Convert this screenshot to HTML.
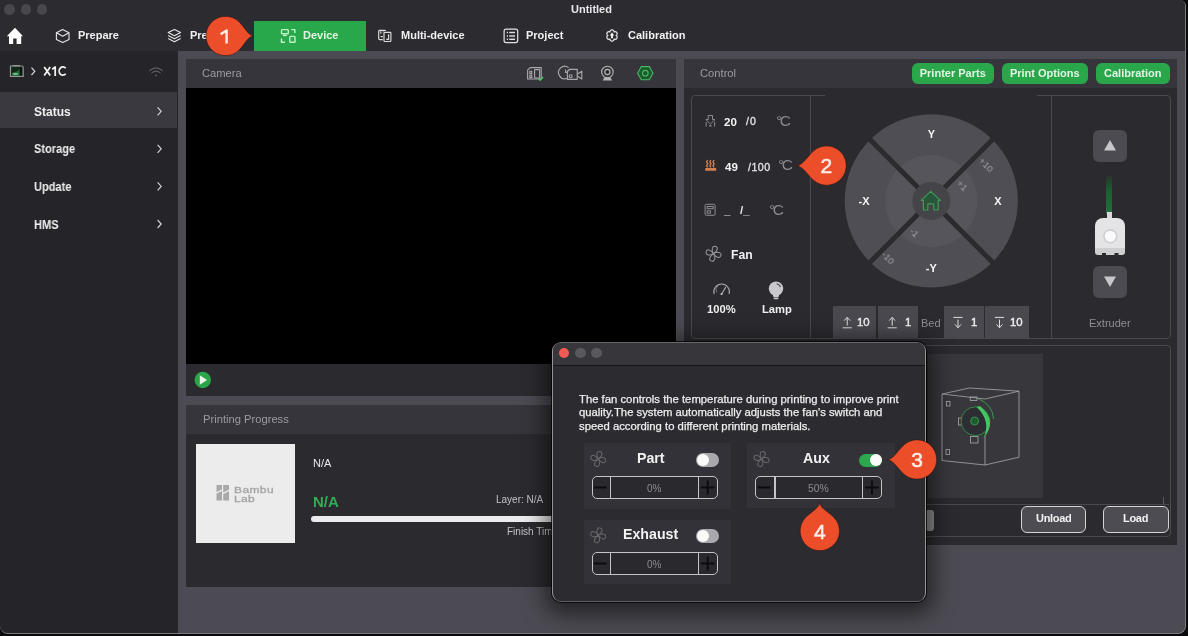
<!DOCTYPE html>
<html><head><meta charset="utf-8">
<style>
*{box-sizing:border-box;margin:0;padding:0}
html,body{width:1188px;height:636px;overflow:hidden;background:#0a0a0c}
body{position:relative;font-family:"Liberation Sans",sans-serif;color:#fff}
.a{position:absolute}
.t{position:absolute;white-space:nowrap;line-height:1;will-change:transform}
svg{position:absolute;overflow:visible}
svg text{will-change:transform}
.tab{font-size:11px;font-weight:bold;color:#f0f0f2;top:30px}
.side{font-size:12px;font-weight:bold;color:#efeff1;left:33.5px}
.hdr{font-size:11.2px;color:#9c9ba1;top:68px}
.gbtn{position:absolute;top:63px;height:21px;background:#2aa64b;border-radius:6px;font-size:11px;font-weight:bold;color:#e3f6e5;text-align:center;line-height:21px;white-space:nowrap;will-change:transform}
</style></head><body>
<!-- window -->
<div class="a" style="left:0;top:0;width:1186px;height:634px;background:#4c4b53;border-right:1px solid #7a797f;border-bottom:1.5px solid #7a797f;border-radius:0 6px 8px 8px"></div>
<!-- top bar -->
<div class="a" style="left:0;top:0;width:1185px;height:51px;background:#2c2b30;border-radius:0 5px 0 0"></div>
<div class="a" style="left:4.2px;top:4.2px;width:10.4px;height:10.4px;border-radius:50%;background:#48474c"></div>
<div class="a" style="left:20.8px;top:4.2px;width:10.4px;height:10.4px;border-radius:50%;background:#48474c"></div>
<div class="a" style="left:36.8px;top:4.2px;width:10.4px;height:10.4px;border-radius:50%;background:#48474c"></div>
<div class="t" style="left:570.5px;top:4px;font-size:11px;font-weight:bold;color:#e8e8ea">Untitled</div>

<!-- tabs -->
<svg style="left:0;top:0" width="1" height="1">
 <!-- home -->
 <path d="M15 27.8 L6.8 36.3 L9 36.3 L9 44 L13.2 44 L13.2 38.4 L16.6 38.4 L16.6 44 L21.2 44 L21.2 36.3 L23 36.3 Z" fill="#fff"/>
 <!-- cube -->
 <g fill="none" stroke="#e6e6e8" stroke-width="1.1" stroke-linejoin="round">
  <path d="M62.7 29.4 L69 32.8 L69 39.4 L62.7 42.6 L56.4 39.4 L56.4 32.8 Z"/>
  <path d="M56.4 32.8 L62.7 36.2 L69 32.8"/>
 </g>
 <!-- layers -->
 <g fill="none" stroke="#e6e6e8" stroke-width="1.1" stroke-linejoin="round">
  <path d="M174.4 29.5 L180.6 32.6 L174.4 35.7 L168.2 32.6 Z"/>
  <path d="M168.2 35.6 L174.4 38.7 L180.6 35.6"/>
  <path d="M168.2 38.6 L174.4 41.7 L180.6 38.6"/>
 </g>
</svg>
<div class="t tab" style="left:78.4px">Prepare</div>
<div class="t tab" style="left:189.5px">Preview</div>
<div class="a" style="left:254px;top:21px;width:112px;height:30px;background:#29a74b"></div>
<svg style="left:0;top:0" width="1" height="1">
 <g fill="none" stroke="#bff5c9" stroke-width="1.4">
  <rect x="281.5" y="29.6" width="6.8" height="4.2" rx="0.8"/>
  <path d="M283 35.4 H286.8"/>
  <path d="M291.3 29.6 H294.8 V33"/>
  <path d="M281.5 38.6 V42.2 H285"/>
  <rect x="289.8" y="36.4" width="5.2" height="5.8" rx="0.8"/>
 </g>
</svg>
<div class="t tab" style="left:303.3px;color:#dff7e3">Device</div>
<svg style="left:0;top:0" width="1" height="1">
 <g fill="none" stroke="#dcdcde" stroke-width="1.15">
  <rect x="378.7" y="30.4" width="6.8" height="9.2" rx="0.8"/>
  <path d="M380.8 31.2 V33.6 M383.4 31.2 V33.6 M380.6 36.6 H383.6"/>
  <rect x="384" y="32.3" width="6.9" height="9.2" rx="0.8" fill="#2c2b30" stroke="#2c2b30" stroke-width="2.4"/>
  <rect x="384" y="32.3" width="6.9" height="9.2" rx="0.8"/>
  <path d="M388.6 34.2 V39.4 H386.2"/>
 </g>
 <g fill="none" stroke="#e2e2e4" stroke-width="1.2">
  <rect x="504.1" y="29.2" width="13.6" height="13.4" rx="2"/>
 </g>
 <g fill="#e2e2e4">
  <rect x="506.8" y="31.8" width="1.2" height="1.4"/><rect x="509.2" y="31.8" width="5.8" height="1.4"/>
  <rect x="506.8" y="35.3" width="1.2" height="1.4"/><rect x="509.2" y="35.3" width="5.8" height="1.4"/>
  <rect x="506.8" y="38.6" width="1.2" height="1.4"/><rect x="509.2" y="38.6" width="5.8" height="1.4"/>
 </g>
 <g fill="none" stroke="#e6e6e8" stroke-width="1.2">
  <path d="M616.2 35.5L616.5 35.2L616.8 34.9L617.0 34.5L617.1 34.1L617.1 33.8L617.1 33.4L617.0 33.0L616.8 32.7L616.6 32.4L616.4 32.1L616.1 31.9L615.7 31.8L615.4 31.7L615.0 31.7L614.5 31.7L614.1 31.9L614.0 31.4L613.9 31.0L613.6 30.7L613.4 30.4L613.1 30.2L612.7 30.0L612.4 29.9L612.0 29.9L611.6 29.9L611.3 30.0L610.9 30.2L610.6 30.4L610.4 30.7L610.1 31.0L610.0 31.4L609.9 31.9L609.5 31.7L609.0 31.7L608.6 31.7L608.3 31.8L607.9 31.9L607.6 32.1L607.4 32.4L607.2 32.7L607.0 33.0L606.9 33.4L606.9 33.8L606.9 34.1L607.0 34.5L607.2 34.9L607.5 35.2L607.8 35.5L607.5 35.8L607.2 36.1L607.0 36.5L606.9 36.9L606.9 37.2L606.9 37.6L607.0 38.0L607.2 38.3L607.4 38.6L607.6 38.9L607.9 39.1L608.3 39.2L608.6 39.3L609.0 39.3L609.5 39.3L609.9 39.1L610.0 39.6L610.1 40.0L610.4 40.3L610.6 40.6L610.9 40.8L611.3 41.0L611.6 41.1L612.0 41.1L612.4 41.1L612.7 41.0L613.1 40.8L613.4 40.6L613.6 40.3L613.9 40.0L614.0 39.6L614.1 39.1L614.5 39.3L615.0 39.3L615.4 39.3L615.7 39.2L616.1 39.1L616.4 38.9L616.6 38.6L616.8 38.3L617.0 38.0L617.1 37.6L617.1 37.2L617.1 36.9L617.0 36.5L616.8 36.1L616.5 35.8Z"/>
 </g>
 <path d="M612 32.6 L614.2 35.4 L612.9 35.4 L612.9 38.2 L611.1 38.2 L611.1 35.4 L609.8 35.4 Z" fill="#fff"/>
</svg>
<div class="t tab" style="left:400.5px">Multi-device</div>
<div class="t tab" style="left:525.8px">Project</div>
<div class="t tab" style="left:627.8px">Calibration</div>

<!-- sidebar -->
<div class="a" style="left:0;top:51px;width:178px;height:582px;background:#252429;border-radius:0 0 0 8px"></div>
<div class="a" style="left:0;top:92px;width:177px;height:36px;background:#3a393f"></div>
<svg style="left:0;top:0" width="1" height="1">
 <path d="M10.5 66 H22 Q23.2 66.2 23.2 67.5 V76.4 H10.5 Z" fill="#15251a" stroke="#8e9990" stroke-width="1.2"/>
 <path d="M20.8 67.5 V75.5" stroke="#0a0f0b" stroke-width="1.6"/>
 <path d="M12.8 65.8 H20" stroke="#a5aca7" stroke-width="1"/>
 <ellipse cx="15.8" cy="73.8" rx="3.6" ry="1.6" fill="#5aa870"/>
 <path d="M11.8 75.5 Q13 71.5 16 71.8 Q18.5 70.8 19.5 68.5 V75.5 Z" fill="#22683a"/>
 <ellipse cx="15.5" cy="74" rx="3" ry="1.1" fill="#6fbf86"/>
 <path d="M31.5 67.6 L34.8 71.3 L31.5 75" fill="none" stroke="#d8d8da" stroke-width="1.2"/>
 <g fill="none" stroke="#5c5b60" stroke-width="1.2" stroke-linecap="round">
  <path d="M149.6 70.6 Q156 65 162.4 70.6"/>
  <path d="M151.8 72.9 Q156 69.3 160.2 72.9"/>
 </g>
 <circle cx="156" cy="75.4" r="1" fill="#5c5b60"/>
 <g fill="none" stroke="#cfcfd2" stroke-width="1.2">
  <path d="M157.6 107.3 L161.2 111.3 L157.6 115.3"/>
  <path d="M157.6 144.8 L161.2 148.8 L157.6 152.8"/>
  <path d="M157.6 182.4 L161.2 186.4 L157.6 190.4"/>
  <path d="M157.6 220 L161.2 224 L157.6 228"/>
 </g>
</svg>
<svg style="left:0;top:0" width="1" height="1"><g fill="none" stroke="#f2f2f2" stroke-width="1.75">
 <path d="M44.2 66.9 L50.2 75.4 M50.2 66.9 L44.2 75.4"/>
 <path d="M52.2 69.2 L55.2 67 V75.9" stroke-linejoin="round"/>
 <path d="M65.7 68.3 A3.75 4.15 0 1 0 65.7 73.8"/>
</g></svg>
<div class="t side" style="top:105.5px">Status</div>
<div class="t side" style="top:143px;transform:scaleX(0.92);transform-origin:0 0">Storage</div>
<div class="t side" style="top:180.5px;transform:scaleX(0.92);transform-origin:0 0">Update</div>
<div class="t side" style="top:218.5px;transform:scaleX(0.92);transform-origin:0 0">HMS</div>
<!-- camera panel -->
<div class="a" style="left:186px;top:59px;width:490px;height:29px;background:#36353b"></div>
<div class="t hdr" style="left:202px">Camera</div>
<svg style="left:0;top:0" width="1" height="1">
 <g fill="none" stroke="#a9a8ad" stroke-width="1.1" stroke-linejoin="round">
  <path d="M530.2 67.6 H541.2 V79 H527.6 V70.2 Z"/>
  <rect x="534.6" y="69.6" width="5" height="8.4" rx="0.5"/>
  <path d="M529.8 71.2 H531.8 V73.6 H529.8 Z M529.8 75.2 H531.8 V77.6 H529.8 Z"/>
 </g>
 <path d="M538.6 78.4 L540.2 80 L543 77" fill="none" stroke="#4fc46e" stroke-width="1.6"/>
 <g fill="none" stroke="#a9a8ad" stroke-width="1.1" stroke-linejoin="round">
  <path d="M568.6 67.6 A6.2 6.2 0 1 0 567.2 78.2"/>
  <path d="M565.6 69.6 V72.4 H567"/>
  <path d="M567.4 70.8 H569 V69.4 H577.2 V79.4 H567.4 Z"/>
  <circle cx="570.6" cy="76.2" r="1.5"/>
  <path d="M577.2 74.2 L581.8 71.2 V79 L577.2 76"/>
 </g>
 <g fill="none" stroke="#b4b3b8" stroke-width="1.1">
  <circle cx="607.4" cy="72" r="5.8"/>
  <circle cx="607.4" cy="72" r="2.6"/>
 </g>
 <circle cx="607.4" cy="72" r="1.1" fill="#1a1a1c"/>
 <path d="M604.2 77.4 L602.8 80.6 H612 L610.6 77.4 Z" fill="#b4b3b8"/>
 <path d="M641.3 66.6 H649.3 L653 73.2 L649.3 79.8 H641.3 L637.6 73.2 Z" fill="#175c2a" stroke="#4db46b" stroke-width="1.1"/>
 <circle cx="645.3" cy="73.2" r="2.8" fill="none" stroke="#4db46b" stroke-width="1.1"/>
</svg>
<div class="a" style="left:186px;top:88px;width:490px;height:276px;background:#000"></div>
<div class="a" style="left:186px;top:364px;width:490px;height:32px;background:#2b2a2f"></div>
<svg style="left:0;top:0" width="1" height="1">
 <circle cx="202.8" cy="380" r="8.2" fill="#2aa54a"/>
 <path d="M199.8 375.3 L207 380 L199.8 384.7 Z" fill="#e9f7ea"/>
</svg>

<!-- printing progress -->
<div class="a" style="left:186px;top:405px;width:490px;height:29px;background:#36353b"></div>
<div class="t hdr" style="left:202.5px;top:414px">Printing Progress</div>
<div class="a" style="left:186px;top:434px;width:490px;height:152.5px;background:#2b2a2f"></div>
<div class="a" style="left:196px;top:444px;width:99px;height:99px;background:#ececec"></div>
<svg style="left:0;top:0" width="1" height="1">
 <g fill="#a9a9a9">
  <path d="M216.5 485 H222 V489.5 L216.5 492 Z"/>
  <path d="M216.5 493.5 L222 491 V500.5 H216.5 Z"/>
  <path d="M223.2 485 H229 V489.8 L223.2 492.5 Z"/>
  <path d="M223.2 494 L229 491.3 V500.5 H223.2 Z"/>
 </g>
</svg>
<div class="t" style="left:233.6px;top:485.6px;font-size:8.8px;color:#a4a4a4;-webkit-text-stroke:0.3px #a4a4a4;letter-spacing:0.3px;line-height:8.6px;transform:scaleX(1.36);transform-origin:0 0">Bambu<br>Lab</div>
<div class="t" style="left:312.5px;top:457.5px;font-size:11px;color:#e8e8ea">N/A</div>
<div class="t" style="left:312.5px;top:493.5px;font-size:15px;font-weight:bold;color:#2fae55">N/A</div>
<div class="t" style="left:495.5px;top:495px;font-size:10px;color:#c5c5c8">Layer: N/A</div>
<div class="t" style="left:506.5px;top:527px;font-size:10px;color:#c5c5c8">Finish Time</div>
<div class="a" style="left:311px;top:515.5px;width:260px;height:6.5px;border-radius:3.5px;background:#ececee"></div>
<!-- control panel -->
<div class="a" style="left:684px;top:59px;width:493px;height:29px;background:#36353b"></div>
<div class="t hdr" style="left:700px">Control</div>
<div class="gbtn" style="left:911.5px;width:81.5px">Printer Parts</div>
<div class="gbtn" style="left:1002px;width:85.5px">Print Options</div>
<div class="gbtn" style="left:1096px;width:73.5px">Calibration</div>
<div class="a" style="left:684px;top:88px;width:493px;height:457px;background:#2b2a2f"></div>
<!-- top inner box -->
<div class="a" style="left:691px;top:95px;width:480px;height:244px;border:1px solid #4a494f;border-radius:4px"></div>
<div class="a" style="left:810px;top:96px;width:1px;height:242px;background:#4a494f"></div>
<div class="a" style="left:1051px;top:96px;width:1px;height:242px;background:#4a494f"></div>
<div class="a" style="left:825px;top:95px;width:212px;height:1px;background:#2b2a2f"></div>

<!-- temps -->
<svg style="left:0;top:0" width="1" height="1">
 <g fill="none" stroke="#8d8c91" stroke-width="1">
  <path d="M708.3 115.5 H712.5 V119.5 H715 L710.4 124 L705.8 119.5 H708.3 Z"/>
  <path d="M706.2 122 V126.5 M714.6 122 V126.5"/>
 </g>
 <g fill="#8d8c91"><rect x="709.4" y="125" width="2" height="1.6"/></g>
 <g fill="none" stroke="#d98050" stroke-width="1.3" stroke-linejoin="round">
  <path d="M707.6 160 L706.6 161.9 L707.8 163.8 L706.6 165.6 L707.6 167.4"/>
  <path d="M710.8 160 L709.8 161.9 L711 163.8 L709.8 165.6 L710.8 167.4"/>
  <path d="M714 160 L713 161.9 L714.2 163.8 L713 165.6 L714 167.4"/>
 </g>
 <rect x="705.2" y="168" width="11" height="2.8" rx="0.6" fill="#d6804e"/>
 <g fill="none" stroke="#8d8c91" stroke-width="1">
  <rect x="705.1" y="204.3" width="10" height="11" rx="1.2"/>
  <rect x="707.2" y="206.5" width="6" height="2.2"/>
  <rect x="707.2" y="210.8" width="3.2" height="2.4"/>
 </g>
 <!-- fan icon -->
 <g fill="none" stroke="#9a999e" stroke-width="1" transform="translate(713.5 253.7)">
  <path id="blade" d="M0 0 C-3.4 -2.4 -3.8 -7.4 -0.6 -7.6 C2.6 -7.8 3.4 -4.6 0 0 Z" transform="rotate(18)"/>
  <use href="#blade" transform="rotate(90)"/>
  <use href="#blade" transform="rotate(180)"/>
  <use href="#blade" transform="rotate(270)"/>
 </g>
 <!-- gauge -->
 <g fill="none" stroke="#a8a7ac" stroke-width="1.1" stroke-linecap="round">
  <path d="M714 293.6 A7.8 7.8 0 1 1 729.2 293.6"/>
  <path d="M716.4 292.2 A5.4 5.4 0 0 1 718 285.6" stroke-width="0.6"/>
  <path d="M721.6 294 L725.6 287.4"/>
 </g>
 <circle cx="721.6" cy="294" r="1.1" fill="#c8c7cc"/>
 <!-- lamp -->
 <circle cx="776" cy="288.6" r="7.2" fill="#c9c8cd"/>
 <path d="M772.2 292.5 H779.8 L778.6 297 H773.4 Z" fill="#c9c8cd"/>
 <rect x="773.6" y="297.6" width="4.8" height="1.6" rx="0.6" fill="#c9c8cd"/>
 <path d="M776.6 283.8 A4.8 4.8 0 0 1 780.4 287.2" fill="none" stroke="#4d4c52" stroke-width="1.1"/>
</svg>
<div class="t" style="left:723.8px;top:116px;font-size:11.6px;font-weight:bold;color:#f3f3f4">20</div>
<div class="t" style="left:746.4px;top:116.2px;font-size:10.6px;color:#e5e5e7;-webkit-text-stroke:0.3px #e5e5e7;letter-spacing:1px">/0</div>
<div class="t" style="left:776px;top:113px;font-size:15.5px;color:#8a898e;letter-spacing:-2.4px">°C</div>
<div class="t" style="left:724.8px;top:160.5px;font-size:11.6px;font-weight:bold;color:#f3f3f4">49</div>
<div class="t" style="left:748px;top:161.5px;font-size:10.6px;color:#e5e5e7;letter-spacing:0.5px;-webkit-text-stroke:0.3px #e5e5e7">/100</div>
<div class="t" style="left:777.5px;top:157.3px;font-size:15.5px;color:#8a898e;letter-spacing:-2.4px">°C</div>
<div class="t" style="left:723.8px;top:203.5px;font-size:11.6px;font-weight:bold;color:#f3f3f4">_</div>
<div class="t" style="left:739.8px;top:203.5px;font-size:11.6px;font-weight:bold;color:#e5e5e7">/_</div>
<div class="t" style="left:769.3px;top:201.5px;font-size:15.5px;color:#8a898e;letter-spacing:-2.4px">°C</div>
<div class="t" style="left:730.5px;top:248.5px;font-size:12.2px;font-weight:bold;color:#f0f0f2">Fan</div>
<div class="t" style="left:706.5px;top:304px;font-size:11.2px;font-weight:bold;color:#efeff1">100%</div>
<div class="t" style="left:761.5px;top:304px;font-size:11.2px;font-weight:bold;color:#efeff1">Lamp</div>

<!-- joystick -->
<svg style="left:0;top:0" width="1" height="1">
 <circle cx="931.3" cy="200.9" r="86.6" fill="#4f4e55"/>
 <circle cx="931.3" cy="200.9" r="46" fill="#56555b"/>
 <g stroke="#2b2a2f" stroke-width="5">
  <path d="M869.5 139.1 L993.1 262.7 M993.1 139.1 L869.5 262.7"/>
 </g>
 <circle cx="931.3" cy="200.9" r="19" fill="#454449"/>
 <path d="M930.8 191.4 L940.4 200.4 L938.2 200.4 L938.2 210 L933.8 210 L933.8 203.8 L927.8 203.8 L927.8 210 L923.4 210 L923.4 200.4 L921.2 200.4 Z" fill="#28563a" stroke="#3f9a58" stroke-width="1.2" stroke-linejoin="round"/>
 <g font-family="Liberation Sans" font-size="9.6" fill="#a3a2a8">
  <text x="986" y="168" transform="rotate(45 986 165)" text-anchor="middle">+10</text>
  <text x="962.5" y="188.5" transform="rotate(45 962.5 185.5)" text-anchor="middle">+1</text>
  <text x="914.6" y="235.5" transform="rotate(45 914.6 232.5)" text-anchor="middle">-1</text>
  <text x="888" y="261" transform="rotate(45 888 258)" text-anchor="middle">-10</text>
 </g>
 <g font-family="Liberation Sans" font-size="11" font-weight="bold" fill="#f4f4f5" text-anchor="middle">
  <text x="931.3" y="138">Y</text>
  <text x="864" y="205">-X</text>
  <text x="998" y="205">X</text>
  <text x="931.3" y="272">-Y</text>
 </g>
</svg>

<!-- bed buttons -->
<div class="a" style="left:833px;top:306px;width:43px;height:33px;background:#4a4950"></div>
<div class="a" style="left:878px;top:306px;width:39.5px;height:33px;background:#4a4950"></div>
<div class="a" style="left:943.5px;top:306px;width:40px;height:33px;background:#4a4950"></div>
<div class="a" style="left:985px;top:306px;width:43.5px;height:33px;background:#4a4950"></div>
<svg style="left:0;top:0" width="1" height="1">
 <g fill="none" stroke="#dedee0" stroke-width="1">
  <path d="M847.2 325.6 V317.6 M844.2 320.6 L847.2 317.4 L850.2 320.6 M842.6 327.8 H851.8"/>
  <path d="M892.2 325.6 V317.6 M889.2 320.6 L892.2 317.4 L895.2 320.6 M887.6 327.8 H896.8"/>
  <path d="M958 319.6 V327.6 M955 324.4 L958 327.8 L961 324.4 M953.4 317.4 H962.6"/>
  <path d="M999.5 319.6 V327.6 M996.5 324.4 L999.5 327.8 L1002.5 324.4 M994.9 317.4 H1004.1"/>
 </g>
</svg>
<div class="t" style="left:857px;top:317px;font-size:11.4px;color:#ededef;-webkit-text-stroke:0.4px #ededef">10</div>
<div class="t" style="left:905px;top:317px;font-size:11.4px;color:#ededef;-webkit-text-stroke:0.4px #ededef">1</div>
<div class="t" style="left:921.3px;top:317.5px;font-size:11px;color:#8f8e93">Bed</div>
<div class="t" style="left:971px;top:317px;font-size:11.4px;color:#ededef;-webkit-text-stroke:0.4px #ededef">1</div>
<div class="t" style="left:1010px;top:317px;font-size:11.4px;color:#ededef;-webkit-text-stroke:0.4px #ededef">10</div>

<!-- extruder -->
<div class="a" style="left:1093px;top:129.5px;width:34px;height:32.5px;border-radius:6px;background:#4c4b52"></div>
<svg style="left:0;top:0" width="1" height="1">
 <path d="M1110 140 L1116 150.5 H1104 Z" fill="#c8c7cc"/>
</svg>
<div class="a" style="left:1093px;top:265.5px;width:34px;height:32.5px;border-radius:6px;background:#4c4b52"></div>
<svg style="left:0;top:0" width="1" height="1"><path d="M1104 276.5 H1116 L1110 287 Z" fill="#c8c7cc"/></svg>
<div class="a" style="left:1106.2px;top:176px;width:6.4px;height:38px;background:linear-gradient(180deg,rgba(25,80,40,0.3),#1b5e2e 35%,#22703a);width:6.2px"></div>
<div class="a" style="left:1107px;top:212px;width:5px;height:7px;background:#d8d8da"></div>
<div class="a" style="left:1095.3px;top:218px;width:30px;height:34px;border-radius:8px 8px 2px 2px;background:#e4e4e6"></div>
<div class="a" style="left:1095.3px;top:248px;width:30px;height:7px;border-radius:0 0 3px 3px;background:#cfcfd2"></div>
<svg style="left:0;top:0" width="1" height="1">
 <circle cx="1110.3" cy="236.3" r="6.4" fill="#fafafa" stroke="#d0d0d3" stroke-width="1.6"/>
 <rect x="1102" y="253" width="4" height="2.5" fill="#2b2a2f"/>
 <rect x="1114.5" y="253" width="4" height="2.5" fill="#2b2a2f"/>
</svg>
<div class="t" style="left:1088.8px;top:317.5px;font-size:11px;color:#8f8e93">Extruder</div>

<!-- lower ams box -->
<div class="a" style="left:691px;top:344.5px;width:480px;height:192.5px;border:1px solid #4a494f;border-radius:4px"></div>
<div class="a" style="left:927.5px;top:354px;width:115.5px;height:143.5px;background:#38373c"></div>
<div class="a" style="left:692px;top:504px;width:477px;height:1px;background:#4a494f"></div>
<div class="a" style="left:1162.5px;top:497px;width:1px;height:7px;background:#5a595e"></div>
<div class="a" style="left:925px;top:510px;width:9px;height:21px;border-radius:3px;background:#8e8d92"></div>
<svg style="left:0;top:0" width="1" height="1">
 <g fill="none" stroke="#a9a8ad" stroke-width="0.8">
  <path d="M942 394 L969.5 388 L1019 391.2 L1019 457.2 L985 465 L942 460.5 Z"/>
  <path d="M942 394 L985 399 L1019 391.2 M985 436 L985 465"/>
  <rect x="946.5" y="401.5" width="3.5" height="4.5"/>
  <rect x="946" y="449.5" width="3.5" height="5"/>
  <rect x="958.6" y="418" width="4.4" height="7"/>
  <rect x="970.6" y="436.6" width="7.4" height="6.4"/>
  <rect x="970.2" y="397" width="6.8" height="3.4"/>
 </g>
 <circle cx="975.5" cy="421.2" r="14.4" fill="#2e2d33" stroke="#2f8a45" stroke-width="1"/>
 <circle cx="974.6" cy="421" r="4" fill="#1f5a30" stroke="#3a9d55" stroke-width="0.9"/>
 <path d="M980 406 Q998 421 983.5 438 Q991.5 421 976.5 407 Z" fill="#44c663"/>
 <path d="M978 398.5 Q993 405 993.5 419" fill="none" stroke="#3ab457" stroke-width="0.8"/>
</svg>
<div class="a" style="left:1020.5px;top:506px;width:65.5px;height:27px;border:1.5px solid #d4d3d8;border-radius:6px;background:#4d4c53"></div>
<div class="a" style="left:1102.5px;top:506px;width:66px;height:27px;border:1.5px solid #d4d3d8;border-radius:6px;background:#4d4c53"></div>
<div class="t" style="left:1035.6px;top:513px;font-size:11px;font-weight:bold;color:#f2f2f3;letter-spacing:-0.3px">Unload</div>
<div class="t" style="left:1123.2px;top:513px;font-size:11px;font-weight:bold;color:#f2f2f3;letter-spacing:-0.3px">Load</div>
<!-- dialog -->
<div class="a" style="left:552px;top:342px;width:374px;height:260px;border-radius:9px;background:#2c2b30;border:1px solid #959499;border-bottom-color:#5f5e63;border-top-color:#68676c;box-shadow:0 0 0 1px rgba(0,0,0,0.75),0 5px 22px 7px rgba(0,0,0,0.55);overflow:hidden">
 <div class="a" style="left:0;top:0;width:372px;height:22.5px;background:#37363b;border-bottom:1px solid #141316"></div>
</div>
<div class="a" style="left:558.5px;top:347.5px;width:10.5px;height:10.5px;border-radius:50%;background:#f25a54"></div>
<div class="a" style="left:575px;top:347.5px;width:10.5px;height:10.5px;border-radius:50%;background:#59585d"></div>
<div class="a" style="left:591.2px;top:347.5px;width:10.5px;height:10.5px;border-radius:50%;background:#59585d"></div>
<div class="t" style="left:579px;top:392.5px;font-size:11.3px;line-height:13.3px;color:#eeeef0;-webkit-text-stroke:0.25px #eeeef0">The fan controls the temperature during printing to improve print<br>quality.The system automatically adjusts the fan's switch and<br>speed according to different printing materials.</div>

<div class="a" style="left:584px;top:443px;width:147px;height:66px;background:#333238"></div>
<div class="a" style="left:747px;top:443px;width:148px;height:65px;background:#333238"></div>
<div class="a" style="left:584px;top:520px;width:147px;height:64px;background:#333238"></div>
<svg style="left:0;top:0" width="1" height="1">
 <defs>
  <path id="bl2" d="M0 0 C-3.4 -2.4 -3.8 -7.4 -0.6 -7.6 C2.6 -7.8 3.4 -4.6 0 0 Z" transform="rotate(18)"/>
 </defs>
 <g fill="none" stroke="#69686d" stroke-width="1">
  <g transform="translate(598.2 459) "><use href="#bl2"/><use href="#bl2" transform="rotate(90)"/><use href="#bl2" transform="rotate(180)"/><use href="#bl2" transform="rotate(270)"/></g>
  <g transform="translate(761.5 459) "><use href="#bl2"/><use href="#bl2" transform="rotate(90)"/><use href="#bl2" transform="rotate(180)"/><use href="#bl2" transform="rotate(270)"/></g>
  <g transform="translate(598.2 535.3) "><use href="#bl2"/><use href="#bl2" transform="rotate(90)"/><use href="#bl2" transform="rotate(180)"/><use href="#bl2" transform="rotate(270)"/></g>
 </g>
</svg>
<div class="t" style="left:637.2px;top:450.5px;font-size:14.2px;font-weight:bold;color:#f2f2f3">Part</div>
<div class="t" style="left:802.5px;top:450.5px;font-size:14.2px;font-weight:bold;color:#f2f2f3">Aux</div>
<div class="t" style="left:623.3px;top:527px;font-size:14.2px;font-weight:bold;color:#f2f2f3">Exhaust</div>
<!-- toggles -->
<div class="a" style="left:696px;top:453px;width:22.5px;height:13.5px;border-radius:7px;background:#a9a8ad"></div>
<div class="a" style="left:696.5px;top:453.5px;width:12.5px;height:12.5px;border-radius:50%;background:#fafafa"></div>
<div class="a" style="left:859px;top:453.5px;width:23px;height:13px;border-radius:7px;background:#2ea84f"></div>
<div class="a" style="left:869.5px;top:454px;width:12px;height:12px;border-radius:50%;background:#fafafa"></div>
<div class="a" style="left:696px;top:529px;width:22.5px;height:13.5px;border-radius:7px;background:#a9a8ad"></div>
<div class="a" style="left:696.5px;top:529.5px;width:12.5px;height:12.5px;border-radius:50%;background:#fafafa"></div>
<!-- steppers -->
<div class="a" style="left:591.5px;top:476px;width:126.5px;height:23px;border:1.5px solid #c4c3c8;border-radius:5px;background:#2a292e"></div>
<div class="a" style="left:755.3px;top:476px;width:126.5px;height:23px;border:1.5px solid #c4c3c8;border-radius:5px;background:#2a292e"></div>
<div class="a" style="left:591.5px;top:552px;width:126.5px;height:23px;border:1.5px solid #c4c3c8;border-radius:5px;background:#2a292e"></div>
<div class="a" style="left:609.5px;top:477px;width:1.2px;height:21px;background:#c4c3c8"></div>
<div class="a" style="left:697.7px;top:477px;width:1.2px;height:21px;background:#c4c3c8"></div>
<div class="a" style="left:774.4px;top:477px;width:1.2px;height:21px;background:#c4c3c8"></div>
<div class="a" style="left:862.2px;top:477px;width:1.2px;height:21px;background:#c4c3c8"></div>
<div class="a" style="left:609.5px;top:553px;width:1.2px;height:21px;background:#c4c3c8"></div>
<div class="a" style="left:697.7px;top:553px;width:1.2px;height:21px;background:#c4c3c8"></div>
<svg style="left:0;top:0" width="1" height="1">
 <g stroke="#0c0c0e" stroke-width="1.9">
  <path d="M594 487.5 H606.5 M701 487.5 H714.5 M707.7 480.5 V494.5"/>
  <path d="M757.8 487.5 H770.3 M865.2 487.5 H878.7 M872 480.5 V494.5"/>
  <path d="M594 563.5 H606.5 M701 563.5 H714.5 M707.7 556.5 V570.5"/>
 </g>
</svg>
<div class="t" style="left:646.5px;top:484px;font-size:10px;color:#8c8b90">0%</div>
<div class="t" style="left:807.5px;top:484px;font-size:10.4px;color:#8c8b90">50%</div>
<div class="t" style="left:646.5px;top:560px;font-size:10px;color:#8c8b90">0%</div>

<!-- callouts -->
<svg style="left:0;top:0" width="1" height="1">
 <defs>
  <path id="cal" d="M0 -19.6 A19.6 19.6 0 0 1 17.4 9 Q12 16 0 19.6 A19.6 19.6 0 0 1 0 -19.6 Z"/>
 </defs>
 <g fill="#ec4e2a" stroke="#2a1410" stroke-width="0.9" stroke-opacity="0.6" stroke-linejoin="round">
  <path d="M254.00 35.80 C247.00 35.85 243.53 24.02 235.87 19.31 L234.04 18.31 L232.11 17.51 L230.11 16.93 L228.06 16.55 L225.98 16.40 L223.89 16.47 L221.83 16.77 L219.80 17.28 L217.85 18.00 L215.98 18.92 L214.22 20.04 L212.59 21.34 L211.10 22.81 L209.78 24.43 L208.64 26.17 L207.69 28.03 L206.95 29.98 L206.41 31.99 L206.10 34.05 L206.00 36.14 L206.13 38.22 L206.47 40.28 L207.04 42.29 L207.81 44.22 L208.78 46.07 L209.95 47.80 L211.29 49.39 L212.79 50.84 L214.44 52.11 L216.22 53.21 L218.10 54.11 L220.07 54.80 L222.10 55.28 L224.17 55.55 L226.25 55.59 L228.33 55.41 L230.38 55.01 L232.37 54.39 L234.29 53.57 L236.10 52.55 C243.70 47.73 247.00 35.85 254.00 35.80 Z"/>
  <path d="M796.40 165.80 C803.40 165.75 808.66 177.57 816.32 182.29 L818.16 183.29 L820.08 184.08 L822.08 184.67 L824.14 185.04 L826.22 185.20 L828.30 185.13 L830.37 184.83 L832.39 184.33 L834.35 183.60 L836.22 182.68 L837.98 181.56 L839.61 180.26 L841.09 178.80 L842.41 177.18 L843.55 175.44 L844.50 173.58 L845.25 171.63 L845.78 169.62 L846.10 167.55 L846.20 165.47 L846.07 163.39 L845.73 161.33 L845.17 159.32 L844.40 157.39 L843.42 155.54 L842.26 153.81 L840.92 152.21 L839.41 150.77 L837.76 149.49 L835.99 148.39 L834.11 147.49 L832.14 146.80 L830.11 146.32 L828.04 146.05 L825.96 146.01 L823.88 146.19 L821.83 146.59 L819.84 147.20 L817.92 148.03 L816.10 149.05 C808.50 153.87 803.40 165.75 796.40 165.80 Z"/>
  <path d="M887.10 459.80 C894.10 459.73 899.10 471.53 906.78 476.23 L908.62 477.22 L910.55 478.01 L912.55 478.59 L914.60 478.95 L916.68 479.10 L918.77 479.02 L920.83 478.72 L922.85 478.21 L924.81 477.48 L926.67 476.55 L928.43 475.42 L930.06 474.12 L931.54 472.65 L932.85 471.03 L933.99 469.28 L934.93 467.42 L935.67 465.47 L936.20 463.45 L936.51 461.39 L936.60 459.30 L936.47 457.22 L936.11 455.17 L935.55 453.16 L934.77 451.22 L933.79 449.38 L932.62 447.66 L931.27 446.06 L929.76 444.62 L928.11 443.35 L926.33 442.26 L924.45 441.37 L922.48 440.68 L920.45 440.21 L918.38 439.95 L916.29 439.91 L914.21 440.10 L912.17 440.51 L910.18 441.13 L908.26 441.96 L906.45 442.98 C898.86 447.83 894.10 459.73 887.10 459.80 Z"/>
  <path d="M819.60 502.00 C819.65 509.00 807.82 513.06 803.11 520.73 L802.11 522.56 L801.31 524.49 L800.73 526.49 L800.35 528.54 L800.20 530.62 L800.27 532.71 L800.57 534.77 L801.08 536.79 L801.80 538.75 L802.72 540.62 L803.84 542.38 L805.14 544.01 L806.61 545.50 L808.22 546.82 L809.97 547.96 L811.83 548.90 L813.77 549.65 L815.79 550.19 L817.85 550.50 L819.94 550.60 L822.02 550.47 L824.07 550.13 L826.08 549.57 L828.02 548.79 L829.86 547.82 L831.59 546.65 L833.19 545.31 L834.64 543.81 L835.91 542.16 L837.01 540.38 L837.91 538.50 L838.60 536.54 L839.08 534.51 L839.35 532.44 L839.39 530.35 L839.21 528.27 L838.81 526.23 L838.20 524.23 L837.37 522.32 L836.35 520.50 C831.53 512.90 819.65 509.00 819.60 502.00 Z"/>
 </g>
 <path d="M220.6 34.2 L226.6 30.4 V43.6" fill="none" stroke="#fcefe9" stroke-width="2.4" stroke-linejoin="round"/>
 <g font-family="Liberation Sans" font-size="21" fill="#fcefe9" stroke="#fcefe9" stroke-width="0.55" text-anchor="middle">
  <text x="826.4" y="173">2</text>
  <text x="917" y="467">3</text>
  <text x="819.8" y="538.8">4</text>
 </g>
</svg>
</body></html>
